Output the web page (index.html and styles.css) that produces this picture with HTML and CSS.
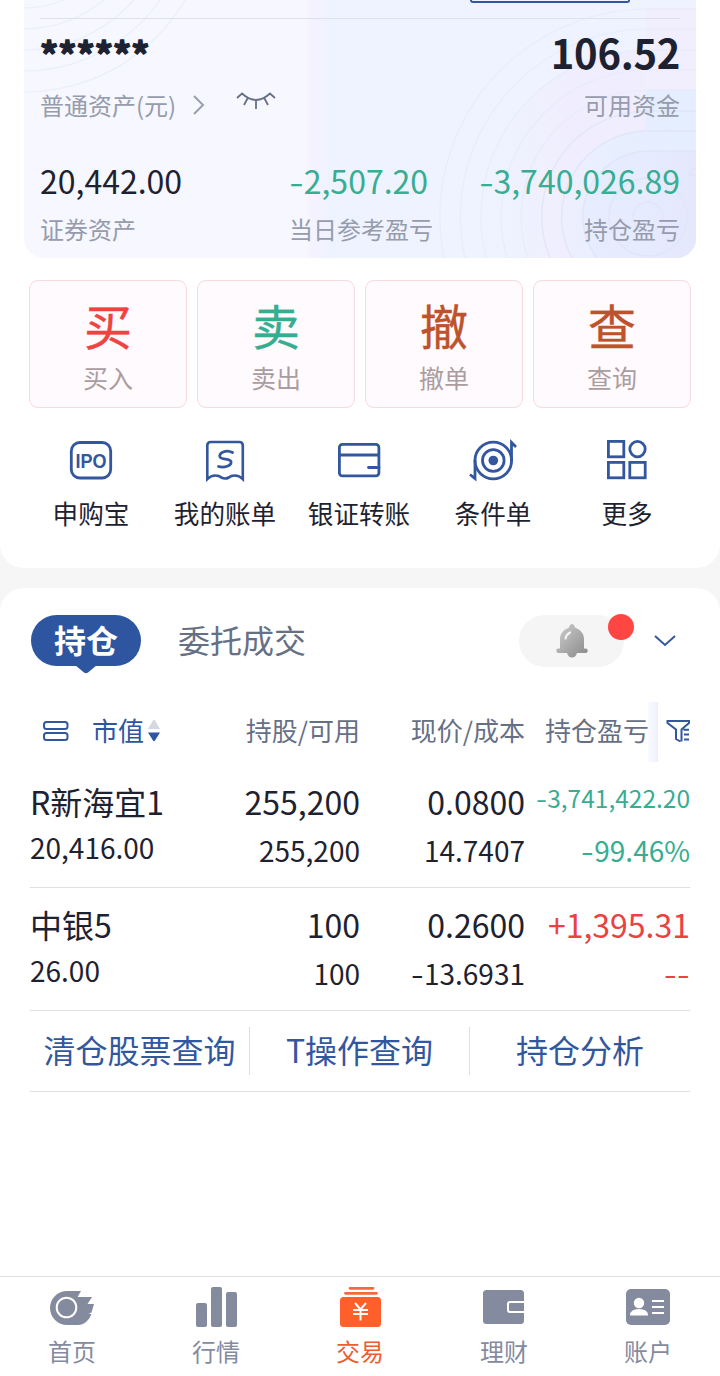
FILE: index.html
```html
<!DOCTYPE html>
<html lang="zh-CN">
<head>
<meta charset="utf-8">
<title>交易</title>
<link rel="stylesheet" href="styles.css">
</head>
<body>
<main class="app">
  <section class="panel panel-top">
    <div class="assets">
      <svg class="assets-bg" width="672" height="258" viewBox="24 0 672 258" fill="none">
        <defs>
          <linearGradient id="band" x1="0" x2="1" y1="0" y2="0"><stop offset="0" stop-color="#f6f7ff"/><stop offset=".25" stop-color="#f5f3fe"/><stop offset=".7" stop-color="#f3f2fe"/><stop offset="1" stop-color="#eff2ff"/></linearGradient>
          <linearGradient id="pink" x1="0" x2="1" y1="0" y2="0"><stop offset="0" stop-color="#f0eefe" stop-opacity="0"/><stop offset=".4" stop-color="#f0eefe"/><stop offset="1" stop-color="#f0eefe"/></linearGradient>
          <linearGradient id="blue" x1="0" x2="1" y1="0" y2="0"><stop offset="0" stop-color="#e9effe" stop-opacity=".3"/><stop offset=".4" stop-color="#e7effe"/><stop offset="1" stop-color="#e5eeff"/></linearGradient>
          <linearGradient id="core" x1="0" x2="1" y1="0" y2="0"><stop offset="0" stop-color="#e6edfe"/><stop offset=".5" stop-color="#e6ebfe"/><stop offset="1" stop-color="#e5e8fd"/></linearGradient>
        </defs>
        <path fill="#f6f7ff" d="M24 0h284v258H24z"/>
        <path fill="url(#band)" d="M306 0h21v258h-21z"/>
        <path fill="#eef3ff" d="M327 0h369v258H327z"/>
        <path fill="url(#pink)" d="M696 50H648A167 167 0 0 0 486 258H696z"/>
        <path fill="#f1eefe" d="M646 8h50v90h-50z"/>
        <path fill="#e5eeff" d="M646 90h50v50h-50z"/>
        <path fill="url(#blue)" d="M696 131H648A86 86 0 0 0 572 258H696z"/>
        <path fill="url(#core)" d="M696 151H648A66 66 0 0 0 597 258H696z"/>
        <g stroke="#dfe4f7" stroke-width="1.4">
          <g opacity=".8"><circle cx="648" cy="217" r="15"/><circle cx="648" cy="217" r="39"/></g>
          <path d="M696 151H648A66 66 0 0 0 597 258M696 131H648A86 86 0 0 0 572 258M696 111H648A106 106 0 0 0 550 258" opacity=".9"/>
          <path d="M700 163l-12 12h12"/>
        </g>
        <g stroke="#e3e9f9" stroke-width="1.2">
          <path d="M696 90H648A127 127 0 0 0 528 258M696 70H648A147 147 0 0 0 507 258M696 50H648A167 167 0 0 0 486 258M696 29H648A188 188 0 0 0 465 258M696 9H648A208 208 0 0 0 444 258" opacity=".7"/>
        </g>
        <g stroke="#e9effb" stroke-width="1.2">
          <circle cx="24" cy="-95" r="103"/><circle cx="24" cy="-95" r="124"/><circle cx="24" cy="-95" r="145"/><circle cx="24" cy="-95" r="166"/><circle cx="24" cy="-95" r="187"/>
        </g>
      </svg>
      <div class="assets-head"><span class="head-button"></span></div>
      <div class="assets-main">
        <div class="total">
          <div class="masked">******</div>
          <div class="label total-label">普通资产(元)
            <svg class="arrow" width="12" height="20" viewBox="0 0 12 20"><path d="M1 1l9 9-9 9" fill="none" stroke="#9a9fae" stroke-width="2"/></svg>
            <svg class="eye" width="40" height="18" viewBox="0 0 40 18"><path d="M1 6l5-4.500q14 13 28 0l5 4.500M11.500 6.500L8 13M20 8.500V17M28.500 6.500L32 13" fill="none" stroke="#667086" stroke-width="1.800"/></svg>
          </div>
        </div>
        <div class="cash">
          <div class="cash-value">106.52</div>
          <div class="label">可用资金</div>
        </div>
      </div>
      <div class="assets-sub">
        <div><div class="value">20,442.00</div><div class="label">证券资产</div></div>
        <div><div class="value green"><i class="minus">-</i>2,507.20</div><div class="label">当日参考盈亏</div></div>
        <div class="right"><div class="value green"><i class="minus">-</i>3,740,026.89</div><div class="label">持仓盈亏</div></div>
      </div>
    </div>

    <div class="actions">
      <div class="action"><b class="glyph buy">买</b><span>买入</span></div>
      <div class="action"><b class="glyph sell">卖</b><span>卖出</span></div>
      <div class="action"><b class="glyph brown">撤</b><span>撤单</span></div>
      <div class="action"><b class="glyph brown">查</b><span>查询</span></div>
    </div>

    <div class="shortcuts">
      <div class="shortcut">
        <svg width="48" height="44" viewBox="0 0 48 44" fill="none" stroke="#33579f"><rect x="4.300" y="4.500" width="39.400" height="35.500" rx="8.500" stroke-width="2.800"/><text class="ipo" x="24" y="30" text-anchor="middle" textLength="31" lengthAdjust="spacingAndGlyphs">IPO</text></svg>
        <span>申购宝</span>
      </div>
      <div class="shortcut">
        <svg width="48" height="44" viewBox="0 0 48 44" fill="none" stroke="#33579f"><path d="M6.300 41V7.500q0-3.500 3.500-3.500h28.500q3.500 0 3.500 3.500V41q-3.500-3.500-8-3.500-4 0-6 2-3.500 2-7.500 0-2-2-6-2-4.500 0-8 3.500z" stroke-width="2.600"/><path d="M31.500 14.500C25 11 17.500 15 19 19c1.200 2.800 10 1.500 11 4.500C31 28 23 30 17.500 28.500" stroke-width="2.800" stroke-linecap="round"/></svg>
        <span>我的账单</span>
      </div>
      <div class="shortcut">
        <svg width="48" height="44" viewBox="0 0 48 44" fill="none" stroke="#33579f" stroke-width="2.800"><rect x="4.400" y="6.400" width="39.500" height="31.500" rx="3"/><path d="M4 17h40"/><path d="M44 29.500H33.500" stroke-linecap="round"/></svg>
        <span>银证转账</span>
      </div>
      <div class="shortcut">
        <svg width="48" height="44" viewBox="0 0 48 44" fill="none" stroke="#33579f" stroke-width="2.800"><circle cx="24.300" cy="22.500" r="18.300"/><circle cx="24.300" cy="22.500" r="10.800"/><circle cx="24.300" cy="22.500" r="4.800" fill="#33579f" stroke="none"/><path d="M6 22v18.500l-5-4M42.500 23V4.500l4.500 4.500"/></svg>
        <span>条件单</span>
      </div>
      <div class="shortcut">
        <svg width="48" height="44" viewBox="0 0 48 44" fill="none" stroke="#33579f" stroke-width="2.800"><rect x="5.400" y="3.400" width="15.400" height="15.400"/><circle cx="34.500" cy="11.100" r="7.700"/><rect x="5.400" y="24.400" width="15.400" height="15.400"/><rect x="26.800" y="24.400" width="15.400" height="15.400"/></svg>
        <span>更多</span>
      </div>
    </div>
  </section>

  <section class="panel panel-positions">
    <div class="tabs">
      <div class="tab-active">持仓<svg class="pointer" width="22" height="9" viewBox="0 0 22 9"><path d="M0 0h22l-9 7.500q-2 1.500-4 0z" fill="#2e559f"/></svg></div>
      <div class="tab">委托成交</div>
      <div class="bell">
        <svg width="32" height="34" viewBox="0 0 32 34"><defs><linearGradient id="metal" x2="1" y2="1"><stop offset="0" stop-color="#cfcfcf"/><stop offset="1" stop-color="#888"/></linearGradient></defs><path d="M16 0c1.500 0 2.500 2 3.500 4 5.500 2 8.500 6 8.500 11v9.500h1.500a2.200 2.200 0 0 1 0 4.500H21q-1.500 4.500-5 4.500T11 29H2.500a2.200 2.200 0 0 1 0-4.500H4V15C4 10 7 6 12.500 4 13.500 2 14.500 0 16 0z" fill="url(#metal)"/><path d="M9.500 14.500q.8-4 4.500-6" stroke="#f5f5f5" stroke-width="2.200" fill="none" stroke-linecap="round"/></svg>
        <i class="dot"></i>
      </div>
      <svg class="more" width="22" height="12" viewBox="0 0 22 12"><path d="M1 1l10 9 10-9" fill="none" stroke="#33579f" stroke-width="2"/></svg>
    </div>

    <div class="table-head">
      <div class="sort">
        <svg width="26" height="20" viewBox="0 0 26 20" fill="none" stroke="#33579f" stroke-width="2"><rect x="1" y="1" width="23.500" height="7" rx="2.500"/><rect x="1" y="12" width="23.500" height="7" rx="2.500"/></svg>
        <span>市值</span>
        <svg class="sort-arrows" width="14" height="24" viewBox="0 0 14 24"><path d="M1 10L6 1.500q1-1.500 2 0L13 10z" fill="#d5d8de"/><path d="M1 13.500h12l-5 8q-1 1.500-2 0z" fill="#2e559f"/></svg>
      </div>
      <div class="th">持股/可用</div>
      <div class="th">现价/成本</div>
      <div class="th-last"><span>持仓盈亏</span><i class="shade"></i>
        <svg width="24" height="24" viewBox="0 0 24 24" fill="none" stroke="#33579f" stroke-width="2"><path d="M14.500 22.500l-4.500-2.500v-9.500L1.500 4V2H23v2l-7.500 6.500v12M17.500 10.800H23M18 15.500h5M18 20.500h5"/></svg>
      </div>
    </div>

    <div class="position">
      <div class="left"><div class="big">R新海宜1</div><div class="small">20,416.00</div></div>
      <div><div class="big">255,200</div><div class="small">255,200</div></div>
      <div><div class="big">0.0800</div><div class="small">14.7407</div></div>
      <div class="green"><div class="big compact"><i class="minus">-</i>3,741,422.20</div><div class="small"><i class="minus">-</i>99.46%</div></div>
    </div>
    <div class="position">
      <div class="left"><div class="big">中银5</div><div class="small">26.00</div></div>
      <div><div class="big">100</div><div class="small">100</div></div>
      <div><div class="big">0.2600</div><div class="small"><i class="minus">-</i>13.6931</div></div>
      <div class="red"><div class="big">+1,395.31</div><div class="small"><i class="minus">-</i><i class="minus">-</i></div></div>
    </div>

    <div class="links"><span>清仓股票查询</span><span>T操作查询</span><span>持仓分析</span></div>
  </section>

  <nav class="tabbar">
    <div class="nav-item">
      <svg width="48" height="44" viewBox="0 0 48 44"><path d="M19 5h14l-3.500 6H44l-4.500 7H46l-2.500 8.500-3 1.500h3C41 34.500 36 39 30 39H19A17 17 0 0 1 19 5z" fill="#848b9f"/><circle cx="18.500" cy="21.500" r="9.800" fill="none" stroke="#fff" stroke-width="2"/></svg>
      <span>首页</span>
    </div>
    <div class="nav-item">
      <svg width="48" height="44" viewBox="0 0 48 44" fill="#848b9f"><rect x="4" y="17" width="11" height="24" rx="2"/><rect x="19" y="1" width="11" height="40" rx="2"/><rect x="34" y="6" width="11" height="35" rx="2"/></svg>
      <span>行情</span>
    </div>
    <div class="nav-item active">
      <svg width="48" height="44" viewBox="0 0 48 44"><path d="M14 2.300h23M9.500 7.300h31" stroke="#f4683b" stroke-width="2.800" stroke-linecap="round"/><rect x="4" y="11" width="41" height="30" rx="3.500" fill="#ff5f2a"/><path d="M19 17l5.500 6.500 5.500-6.500M24.500 23.500v11M17 24h15M17 28h15" fill="none" stroke="#fff" stroke-width="2"/></svg>
      <span>交易</span>
    </div>
    <div class="nav-item">
      <svg width="48" height="44" viewBox="0 0 48 44"><rect x="3" y="4" width="41" height="34" rx="3.500" fill="#848b9f"/><path d="M44 16H30q-2 0-2 2v6q0 2 2 2h14" fill="none" stroke="#fff" stroke-width="2"/></svg>
      <span>理财</span>
    </div>
    <div class="nav-item">
      <svg width="48" height="44" viewBox="0 0 48 44"><rect x="2" y="3" width="44" height="36" rx="5" fill="#848b9f"/><circle cx="15" cy="17" r="5.200" fill="#fff"/><path d="M6 29.500q0-6.500 9-6.500t9 6.500z" fill="#fff"/><path d="M28 15h12M28 21h12M28 27h12" stroke="#fff" stroke-width="2"/></svg>
      <span>账户</span>
    </div>
  </nav>
</main>
</body>
</html>
```
FILE: styles.css
```css
* { box-sizing: border-box; }
body {
  margin: 0;
  background: #f6f6f6;
  color: #1e2230;
  font-family: "Noto Sans CJK SC", sans-serif;
}
.app { display: flex; flex-direction: column; height: 1376px; overflow: hidden; }
svg { display: block; flex: none; }
.panel { background: #fff; }
.panel-top { height: 568px; border-radius: 0 0 24px 24px; }

/* Asset summary */
.assets {
  position: relative;
  z-index: 0;
  height: 258px;
  margin: 0 24px;
  padding: 0 16px;
  overflow: hidden;
  border-radius: 0 0 20px 20px;
}
.assets-bg { position: absolute; inset: 0; z-index: -1; }
.assets-head { display: flex; justify-content: flex-end; height: 19px; border-bottom: 1px solid #dfe1ea; }
.head-button { width: 160px; height: 3px; margin-right: 50px; border: 2px solid #33579f; border-top: 0; border-radius: 0 0 6px 6px; }
.assets-main { display: flex; justify-content: space-between; padding-top: 2px; }
.masked { height: 69px; padding-top: 2px; font-size: 36px; font-weight: 700; line-height: 60px; -webkit-text-stroke: 1.5px currentColor; }
.label { color: #979cad; font-size: 24px; line-height: 30px; }
.total-label { display: flex; align-items: center; }
.arrow { margin-left: 17px; }
.eye { margin: -9px 0 0 31px; }
.cash { text-align: right; }
.cash-value { height: 69px; padding-top: 1px; font-size: 40px; font-weight: 700; line-height: 60px; letter-spacing: -.3px; }
.assets-sub { display: grid; grid-template-columns: 249px auto 1fr; margin-top: 40px; }
.value { margin-bottom: 14px; font-size: 32px; line-height: 40px; }
.right { text-align: right; }
.green { color: #37ad92; }
.red { color: #ea4141; }
.minus { display: inline-block; width: .46em; font-style: normal; text-align: center; transform: scaleX(1.3); }

/* Trade actions */
.actions { display: grid; grid-template-columns: repeat(4, 158px); gap: 10px; padding: 22px 29px 0; }
.action {
  display: flex;
  flex-direction: column;
  align-items: center;
  height: 128px;
  padding-top: 13px;
  border: 1px solid #f7dadd;
  border-radius: 9px;
  background: #fffafe;
  color: #ab9d9f;
  font-size: 25px;
  line-height: 36px;
}
.glyph { height: 65px; font-size: 48px; font-weight: 400; line-height: 60px; -webkit-text-stroke: .4px currentColor; }
.buy { color: #ee4340; }
.sell { color: #36ac91; }
.brown { color: #bd522c; }

/* Shortcuts */
.shortcuts { display: grid; grid-template-columns: repeat(5, 134px); padding: 30px 24px 0; }
.shortcut { display: flex; flex-direction: column; align-items: center; gap: 12px; font-size: 25.6px; line-height: 38px; white-space: nowrap; }
.ipo { fill: #33579f; stroke: none; font: 700 20.5px "Liberation Sans", sans-serif; }

/* Positions */
.panel-positions { height: 688px; margin-top: 20px; padding: 27px 30px 0; border-radius: 24px 24px 0 0; }
.tabs { display: flex; align-items: flex-start; height: 52px; padding-left: 1px; }
.tab-active {
  position: relative;
  width: 110px;
  height: 51px;
  border-radius: 26px;
  background: #2e559f;
  color: #fff;
  font-size: 32px;
  font-weight: 700;
  line-height: 48px;
  text-align: center;
}
.pointer { position: absolute; left: 44px; top: 50px; }
.tab { margin-left: 37px; color: #667085; font-size: 32px; line-height: 49px; }
.bell { position: relative; display: flex; align-items: center; justify-content: center; width: 105px; height: 52px; margin-left: auto; border-radius: 26px; background: #f5f5f6; }
.dot { position: absolute; left: 89px; top: -1px; width: 26px; height: 26px; border-radius: 50%; background: #ff4643; }
.more { margin: 20px 14px 0 30px; }
.table-head { display: grid; grid-template-columns: repeat(4, 165px); align-items: center; height: 60px; margin-top: 35px; color: #667085; font-size: 26px; line-height: 38px; white-space: nowrap; }
.sort { display: flex; align-items: center; margin-top: -3px; padding-left: 13px; color: #2e559f; }
.sort span { margin: -2px 3px 0 23px; }
.th { margin-top: -5px; text-align: right; }
.th-last { display: flex; align-items: center; justify-content: flex-end; }
.th-last span { margin: -5px -1px 0 0; }
.th-last svg { margin: -3px 0 0 8px; }
.shade { flex: none; width: 10px; height: 60px; background: linear-gradient(90deg, #fafaff, #edf0fd); }
.position { display: grid; grid-template-columns: repeat(4, 165px); height: 123px; padding-top: 15px; border-bottom: 1px solid #e0e1e3; text-align: right; white-space: nowrap; }
.table-head + .position { margin-top: 3px; }
.position > div { display: flex; flex-direction: column; align-items: flex-end; gap: 10px; }
.position > .left { align-items: flex-start; gap: 7px; }
.big { font-size: 32px; line-height: 42px; }
.small { font-size: 28px; line-height: 36px; }
.compact { padding-bottom: 6px; font-size: 24.5px; line-height: 36px; }
.links { display: grid; grid-template-columns: repeat(3, 220px); align-items: center; height: 81px; border-bottom: 1px solid #e0e1e3; color: #33579f; font-size: 32px; line-height: 44px; text-align: center; }
.links span { height: 48px; border-right: 1px solid #dedfe3; }
.links span:last-child { border: 0; }

/* Bottom navigation */
.tabbar { display: grid; grid-template-columns: repeat(5, 144px); height: 100px; border-top: 1px solid #e1e1e1; background: #fff; }
.nav-item { display: flex; flex-direction: column; align-items: center; gap: 9px; padding-top: 9px; color: #848b9f; font-size: 24px; line-height: 24px; }
.active { color: #ed5d32; }
```
